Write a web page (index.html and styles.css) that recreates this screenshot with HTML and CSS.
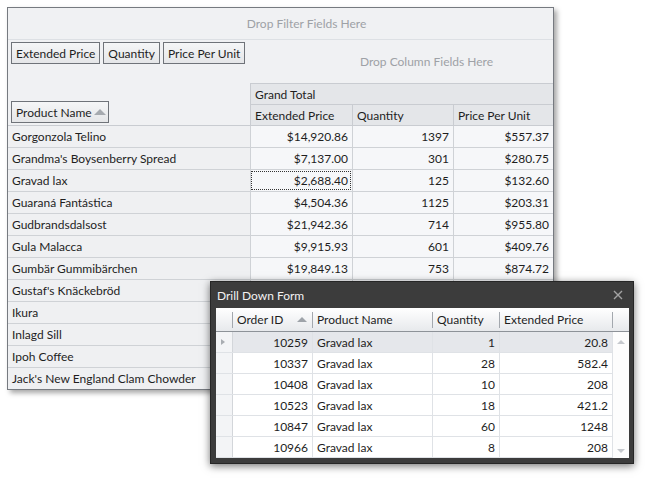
FILE: index.html
```html
<!DOCTYPE html>
<html>
<head>
<meta charset="utf-8">
<link rel="stylesheet" href="styles.css">
</head>
<body>
<div class="pivot">
  <div class="filter-area">Drop Filter Fields Here</div>
  <div class="mid">
    <div class="left-zone">
      <div class="data-fields">
        <span class="field">Extended Price</span>
        <span class="field">Quantity</span>
        <span class="field">Price Per Unit</span>
      </div>
      <div class="row-fields">
        <span class="field">Product Name<i class="sort-up"></i></span>
      </div>
    </div>
    <div class="right-zone">
      <div class="column-area">Drop Column Fields Here</div>
      <div class="gt-head">Grand Total</div>
      <div class="col-heads">
        <div class="h c1">Extended Price</div>
        <div class="h c2">Quantity</div>
        <div class="h c3">Price Per Unit</div>
      </div>
    </div>
  </div>
  <div class="rows">
    <div class="row"><div class="rh">Gorgonzola Telino</div><div class="c c1">$14,920.86</div><div class="c c2">1397</div><div class="c c3">$557.37</div></div>
    <div class="row"><div class="rh">Grandma's Boysenberry Spread</div><div class="c c1">$7,137.00</div><div class="c c2">301</div><div class="c c3">$280.75</div></div>
    <div class="row"><div class="rh">Gravad lax</div><div class="c c1 focus">$2,688.40</div><div class="c c2">125</div><div class="c c3">$132.60</div></div>
    <div class="row"><div class="rh">Guaraná Fantástica</div><div class="c c1">$4,504.36</div><div class="c c2">1125</div><div class="c c3">$203.31</div></div>
    <div class="row"><div class="rh">Gudbrandsdalsost</div><div class="c c1">$21,942.36</div><div class="c c2">714</div><div class="c c3">$955.80</div></div>
    <div class="row"><div class="rh">Gula Malacca</div><div class="c c1">$9,915.93</div><div class="c c2">601</div><div class="c c3">$409.76</div></div>
    <div class="row"><div class="rh">Gumbär Gummibärchen</div><div class="c c1">$19,849.13</div><div class="c c2">753</div><div class="c c3">$874.72</div></div>
    <div class="row"><div class="rh">Gustaf's Knäckebröd</div><div class="c c1"></div><div class="c c2"></div><div class="c c3"></div></div>
    <div class="row"><div class="rh">Ikura</div><div class="c c1"></div><div class="c c2"></div><div class="c c3"></div></div>
    <div class="row"><div class="rh">Inlagd Sill</div><div class="c c1"></div><div class="c c2"></div><div class="c c3"></div></div>
    <div class="row"><div class="rh">Ipoh Coffee</div><div class="c c1"></div><div class="c c2"></div><div class="c c3"></div></div>
    <div class="row last"><div class="rh">Jack's New England Clam Chowder</div><div class="c c1"></div><div class="c c2"></div><div class="c c3"></div></div>
  </div>
</div>

<div class="drill">
  <div class="dd-title">
    <span>Drill Down Form</span>
    <svg class="close" width="10" height="10" viewBox="0 0 10 10"><path d="M1 1 L9 9 M9 1 L1 9" stroke="#a3a3a3" stroke-width="1.4" fill="none"/></svg>
  </div>
  <div class="dd-grid">
    <div class="dd-head">
      <div class="w0"></div>
      <div class="w1"><span>Order ID</span><i class="dd-sort"></i></div>
      <div class="w2">Product Name</div>
      <div class="w3">Quantity</div>
      <div class="w4">Extended Price</div>
      <div class="w5"></div>
    </div>
    <div class="dd-body">
      <div class="dd-rows">
        <div class="dd-row sel"><div class="w0 ind"><i class="arrow"></i></div><div class="w1 num">10259</div><div class="w2">Gravad lax</div><div class="w3 num">1</div><div class="w4 num">20.8</div></div>
        <div class="dd-row"><div class="w0 ind"></div><div class="w1 num">10337</div><div class="w2">Gravad lax</div><div class="w3 num">28</div><div class="w4 num">582.4</div></div>
        <div class="dd-row"><div class="w0 ind"></div><div class="w1 num">10408</div><div class="w2">Gravad lax</div><div class="w3 num">10</div><div class="w4 num">208</div></div>
        <div class="dd-row"><div class="w0 ind"></div><div class="w1 num">10523</div><div class="w2">Gravad lax</div><div class="w3 num">18</div><div class="w4 num">421.2</div></div>
        <div class="dd-row"><div class="w0 ind"></div><div class="w1 num">10847</div><div class="w2">Gravad lax</div><div class="w3 num">60</div><div class="w4 num">1248</div></div>
        <div class="dd-row"><div class="w0 ind"></div><div class="w1 num">10966</div><div class="w2">Gravad lax</div><div class="w3 num">8</div><div class="w4 num">208</div></div>
      </div>
      <div class="scroll"><i class="sc-up"></i><i class="sc-down"></i></div>
    </div>
  </div>
</div>
</body>
</html>
```
FILE: styles.css
```css
* { box-sizing: border-box; }
html, body { margin: 0; padding: 0; background: #fff; }
body {
  font-family: Lato, "Segoe UI", "Liberation Sans", sans-serif;
  font-size: 12px;
  color: #1e1e1e;
  width: 645px;
  height: 480px;
  overflow: hidden;
  position: relative;
}

/* ---------- pivot grid ---------- */
.pivot {
  margin: 7px 0 0 7px;
  width: 547px;
  border: 1px solid #767a80;
  background: #f0f1f3;
  box-shadow: 3px 3px 5px rgba(0, 0, 0, 0.35);
}
.filter-area {
  height: 32px;
  border-bottom: 1px solid #dde0e4;
  padding-left: 52px;
  display: flex;
  align-items: center;
  justify-content: center;
  color: #9ea1a6;
}
.mid {
  display: flex;
  height: 86px;
  border-bottom: 1px solid #c9ccd1;
}
.left-zone {
  width: 242px;
  display: flex;
  flex-direction: column;
  justify-content: space-between;
  padding: 2px 0 2px 3px;
}
.data-fields { display: flex; gap: 3px; }
.row-fields { display: flex; }
.field {
  height: 22px;
  border: 1px solid #6f7379;
  background: linear-gradient(#f5f6f7, #e5e6e8);
  padding: 0 4px;
  display: inline-flex;
  align-items: center;
  white-space: nowrap;
}
.sort-up {
  display: inline-block;
  width: 0;
  height: 0;
  border-left: 6px solid transparent;
  border-right: 6px solid transparent;
  border-bottom: 6px solid #a6aaaf;
  margin-left: 2px;
  margin-right: -2px;
}
.right-zone { flex: 1; display: flex; flex-direction: column; }
.column-area {
  height: 43px;
  padding-left: 50px;
  display: flex;
  align-items: center;
  justify-content: center;
  color: #9ea1a6;
}
.gt-head {
  height: 22px;
  border: 1px solid #c9ccd1;
  border-right: none;
  background: #e4e6e9;
  padding-left: 4px;
  display: flex;
  align-items: center;
}
.col-heads { display: flex; height: 20px; background: #e4e6e9; }
.h {
  border-left: 1px solid #c9ccd1;
  padding-left: 4px;
  display: flex;
  align-items: center;
}
.c1 { width: 102px; }
.c2 { width: 101px; }
.c3 { flex: 1; }

.row { display: flex; height: 22px; border-bottom: 1px solid #cfd2d6; }
.row.last { border-bottom: none; height: 21px; }
.rh {
  width: 242px;
  background: #eff0f2;
  padding-left: 4px;
  display: flex;
  align-items: center;
  white-space: nowrap;
}
.c {
  border-left: 1px solid #cfd2d6;
  background: #f6f7f9;
  padding-right: 4px;
  display: flex;
  align-items: center;
  justify-content: flex-end;
}
.focus { outline: 1px dotted #333; outline-offset: -2px; }

/* ---------- drill down window ---------- */
.drill {
  position: absolute;
  left: 210px;
  top: 281px;
  width: 424px;
  height: 183px;
  background: #3c3c3c;
  border: 1px solid #262626;
  box-shadow: 0 2px 8px rgba(0, 0, 0, 0.55);
  padding: 0 4px 5px 5px;
}
.dd-title {
  height: 26px;
  display: flex;
  align-items: center;
  justify-content: space-between;
  color: #f2f2f2;
  padding: 0 6px 0 1px;
}
.dd-grid { background: #fff; width: 413px; }
.dd-head {
  display: flex;
  height: 24px;
  background: linear-gradient(#ffffff, #e7e9ec);
  border-bottom: 1px solid #8d9298;
}
.dd-head > div {
  position: relative;
  display: flex;
  align-items: center;
  padding-left: 4px;
}
.dd-head > div:not(.w5)::after {
  content: "";
  position: absolute;
  right: 0;
  top: 4px;
  bottom: 3px;
  width: 1px;
  background: #a3a8ae;
}
.dd-head > .w1 { justify-content: space-between; padding-right: 6px; }
.dd-sort {
  display: block;
  width: 0;
  height: 0;
  border-left: 5px solid transparent;
  border-right: 5px solid transparent;
  border-bottom: 5px solid #9ea3a9;
}
.w0 { width: 17px; }
.w1 { width: 80px; }
.w2 { width: 120px; }
.w3 { width: 67px; }
.w4 { width: 113px; }
.w5 { width: 16px; }

.dd-body { display: flex; }
.dd-rows { width: 397px; }
.dd-row { display: flex; height: 21px; border-bottom: 1px solid #dfe2e6; }
.dd-row > div {
  border-right: 1px solid #dfe2e6;
  display: flex;
  align-items: center;
  padding: 0 4px;
}
.dd-row > .ind { background: #f3f4f6; padding: 0 0 0 5px; border-right-color: #d3d6da; }
.dd-row .num { justify-content: flex-end; }
.dd-row.sel > div:not(.ind) { background: #e5e7eb; }
.arrow {
  width: 0;
  height: 0;
  border-top: 3px solid transparent;
  border-bottom: 3px solid transparent;
  border-left: 4px solid #a9adb2;
}
.scroll {
  width: 16px;
  display: flex;
  flex-direction: column;
  justify-content: space-between;
  align-items: center;
  padding: 8px 0 5px;
  background: #fdfdfd;
}
.sc-up, .sc-down {
  width: 0;
  height: 0;
  border-left: 4px solid transparent;
  border-right: 4px solid transparent;
}
.sc-up { border-bottom: 4px solid #c6c9ce; }
.sc-down { border-top: 4px solid #c6c9ce; }
```
